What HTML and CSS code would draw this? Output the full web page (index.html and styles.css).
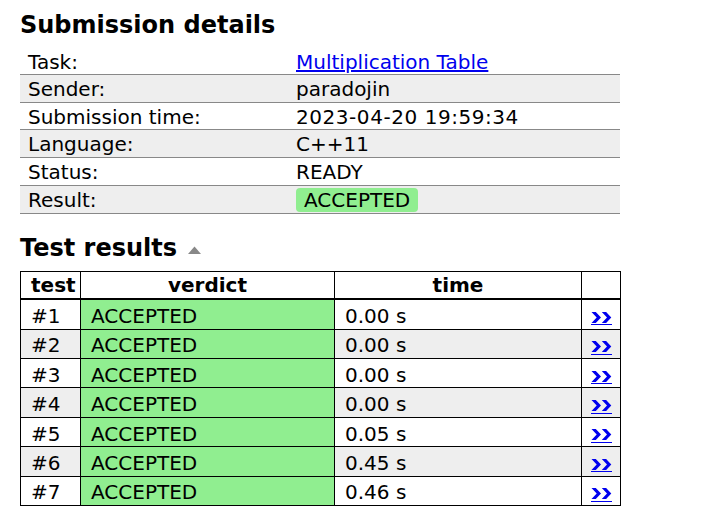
FILE: index.html
```html
<!DOCTYPE html>
<html>
<head>
<meta charset="utf-8">
<link rel="stylesheet" href="styles.css">
</head>
<body>
<div class="page">
  <h2 class="title">Submission details</h2>
  <table class="summary">
    <tr><td class="label">Task:</td><td class="value"><a href="#">Multiplication Table</a></td></tr>
    <tr class="alt"><td class="label">Sender:</td><td class="value">paradojin</td></tr>
    <tr><td class="label">Submission time:</td><td class="value wide">2023-04-20 19:59:34</td></tr>
    <tr class="alt"><td class="label">Language:</td><td class="value">C++11</td></tr>
    <tr><td class="label">Status:</td><td class="value">READY</td></tr>
    <tr class="alt"><td class="label">Result:</td><td class="value"><span class="badge">ACCEPTED</span></td></tr>
  </table>

  <h2 class="title second">Test results <svg class="tri" width="13" height="8" viewBox="0 0 13 8"><polygon points="0,8 6.5,0.5 13,8" fill="#888"/></svg></h2>
  <table class="tests">
    <colgroup>
      <col class="c-test"><col class="c-verdict"><col class="c-time"><col class="c-link">
    </colgroup>
    <thead>
      <tr><th>test</th><th>verdict</th><th>time</th><th></th></tr>
    </thead>
    <tbody>
      <tr><td>#1</td><td class="ok">ACCEPTED</td><td>0.00 s</td><td class="lk"><a href="#" class="more"><svg width="21" height="11" viewBox="0 0 21 11"><polygon points="0.5,0 4.8,0 10,5.5 4.8,11 0.5,11 5.7,5.5"/><polygon points="10.8,0 15.1,0 20.3,5.5 15.1,11 10.8,11 16,5.5"/></svg></a></td></tr>
      <tr class="alt"><td>#2</td><td class="ok">ACCEPTED</td><td>0.00 s</td><td class="lk"><a href="#" class="more"><svg width="21" height="11" viewBox="0 0 21 11"><polygon points="0.5,0 4.8,0 10,5.5 4.8,11 0.5,11 5.7,5.5"/><polygon points="10.8,0 15.1,0 20.3,5.5 15.1,11 10.8,11 16,5.5"/></svg></a></td></tr>
      <tr><td>#3</td><td class="ok">ACCEPTED</td><td>0.00 s</td><td class="lk"><a href="#" class="more"><svg width="21" height="11" viewBox="0 0 21 11"><polygon points="0.5,0 4.8,0 10,5.5 4.8,11 0.5,11 5.7,5.5"/><polygon points="10.8,0 15.1,0 20.3,5.5 15.1,11 10.8,11 16,5.5"/></svg></a></td></tr>
      <tr class="alt"><td>#4</td><td class="ok">ACCEPTED</td><td>0.00 s</td><td class="lk"><a href="#" class="more"><svg width="21" height="11" viewBox="0 0 21 11"><polygon points="0.5,0 4.8,0 10,5.5 4.8,11 0.5,11 5.7,5.5"/><polygon points="10.8,0 15.1,0 20.3,5.5 15.1,11 10.8,11 16,5.5"/></svg></a></td></tr>
      <tr><td>#5</td><td class="ok">ACCEPTED</td><td>0.05 s</td><td class="lk"><a href="#" class="more"><svg width="21" height="11" viewBox="0 0 21 11"><polygon points="0.5,0 4.8,0 10,5.5 4.8,11 0.5,11 5.7,5.5"/><polygon points="10.8,0 15.1,0 20.3,5.5 15.1,11 10.8,11 16,5.5"/></svg></a></td></tr>
      <tr class="alt"><td>#6</td><td class="ok">ACCEPTED</td><td>0.45 s</td><td class="lk"><a href="#" class="more"><svg width="21" height="11" viewBox="0 0 21 11"><polygon points="0.5,0 4.8,0 10,5.5 4.8,11 0.5,11 5.7,5.5"/><polygon points="10.8,0 15.1,0 20.3,5.5 15.1,11 10.8,11 16,5.5"/></svg></a></td></tr>
      <tr><td>#7</td><td class="ok">ACCEPTED</td><td>0.46 s</td><td class="lk"><a href="#" class="more"><svg width="21" height="11" viewBox="0 0 21 11"><polygon points="0.5,0 4.8,0 10,5.5 4.8,11 0.5,11 5.7,5.5"/><polygon points="10.8,0 15.1,0 20.3,5.5 15.1,11 10.8,11 16,5.5"/></svg></a></td></tr>
    </tbody>
  </table>
</div>
</body>
</html>
```
FILE: styles.css
```css
html, body {
  margin: 0;
  padding: 0;
  background: #fff;
}
body {
  font-family: "DejaVu Sans", Verdana, sans-serif;
  font-size: 20px;
  color: #000;
}
.page {
  padding: 10.7px 20px 0 20px;
}
.title {
  font-size: 24px;
  font-weight: bold;
  margin: 0 0 9px 0;
  line-height: normal;
}
.title.second {
  margin-top: 20.6px;
}
.tri {
  vertical-align: 2px;
  margin-left: 3px;
}
a {
  color: #0000ee;
}
.summary {
  border-collapse: collapse;
  width: 600px;
}
.summary td {
  padding: 3px 8px 0.6px 8px;
  border-bottom: 1px solid #888;
  line-height: 23px;
}
.summary td.label {
  width: 252px;
}
.summary td.wide {
  letter-spacing: 0.55px;
}
.summary tr.alt td {
  background: #eee;
}
.badge {
  display: inline-block;
  background: #90ee90;
  border-radius: 4px;
  padding: 0 8px;
  line-height: 24px;
  vertical-align: top;
  margin-top: -0.7px;
}
.tests {
  border-collapse: collapse;
  table-layout: fixed;
  width: 600px;
}
.c-test { width: 60px; }
.c-verdict { width: 254px; }
.c-time { width: 247px; }
.c-link { width: 39px; }
.tests th, .tests td {
  border: 1px solid #000;
  line-height: 23px;
}
.tests th {
  padding: 1.5px 10px;
  font-weight: bold;
  text-align: center;
  border-bottom: 2px solid #000;
}
.tests td {
  padding: 4.8px 10px 0.6px 10px;
  text-align: left;
}
.tests tr.alt td {
  background: #eee;
}
.tests td.ok,
.tests tr.alt td.ok {
  background: #90ee90;
}
.tests td.lk {
  padding: 4.8px 0 0.6px 0;
  text-align: center;
}
.more {
  display: inline-block;
  vertical-align: top;
  margin-top: 6.9px;
  line-height: 0;
  padding-bottom: 1.5px;
  border-bottom: 1px solid #0000ee;
}
.more svg {
  display: block;
  fill: #0000ee;
}
```
